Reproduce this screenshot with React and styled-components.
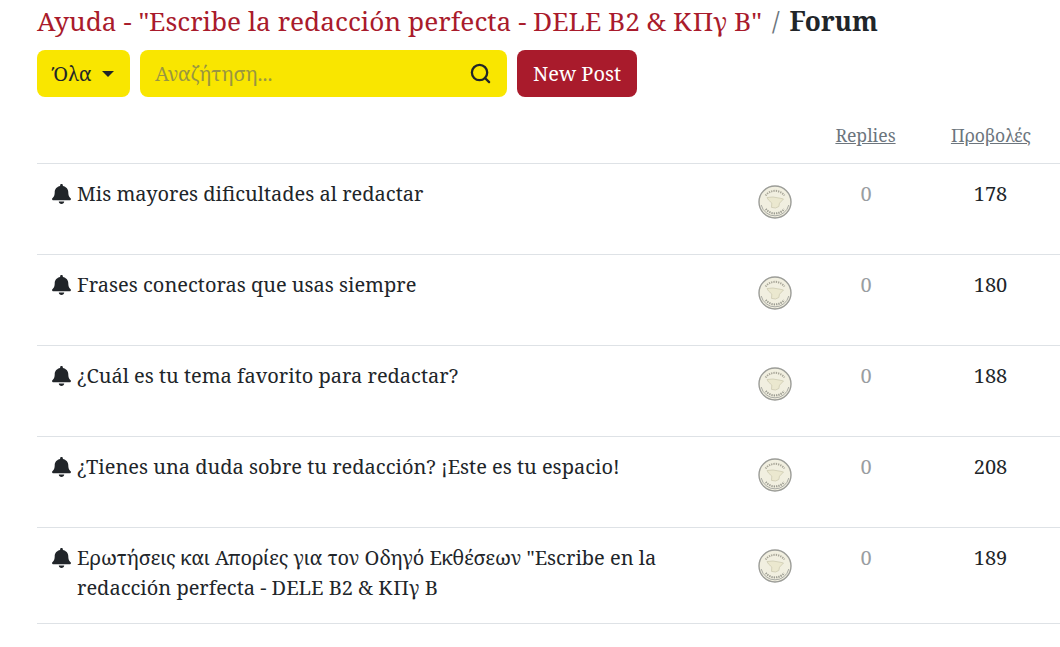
import React from "react";
import styled, { createGlobalStyle } from "styled-components";
import { FaBell } from "react-icons/fa";
import { Search } from "lucide-react";

const Global = createGlobalStyle`
  html, body { margin: 0; padding: 0; background: #fff; overflow: hidden; }
  body { font-family: "Noto Serif", "DejaVu Serif", serif; color: #212529; }
`;

const Page = styled.div`
  width: 1060px;
  height: 647px;
  padding-left: 37px;
  box-sizing: border-box;
  overflow: hidden;
`;
const Breadcrumb = styled.h1`
  display: flex;
  align-items: baseline;
  margin: 0;
  height: 50px;
  padding-top: 5px;
  box-sizing: border-box;
  font-size: 26.25px;
  line-height: 32px;
  font-weight: 400;
  white-space: nowrap;
`;
const Crumb = styled.a`
  color: #a91b2c;
`;
const Sep = styled.span`
  color: #6c757d;
  padding: 0 10px;
`;
const Current = styled.strong`
  font-weight: 700;
  color: #212529;
`;
const Toolbar = styled.div`
  display: flex;
  gap: 10px;
  height: 47px;
`;
const FilterButton = styled.button`
  width: 93px;
  border: 0;
  border-radius: 8px;
  background: #f9e600;
  color: #212529;
  font: inherit;
  font-size: 20px;
  display: flex;
  align-items: center;
  justify-content: center;
  gap: 10px;
  padding: 0;
`;
const Caret = styled.span`
  width: 0;
  height: 0;
  border-left: 6px solid transparent;
  border-right: 6px solid transparent;
  border-top: 6px solid #212529;
`;
const SearchBox = styled.div`
  width: 367px;
  border-radius: 8px;
  background: #f9e600;
  display: flex;
  align-items: center;
  justify-content: space-between;
  padding: 0 15px;
  box-sizing: border-box;
`;
const Placeholder = styled.span`
  color: #999640;
  font-size: 20px;
`;
const PostButton = styled.button`
  width: 120px;
  border: 0;
  border-radius: 8px;
  background: #a91b2c;
  color: #fff;
  font: inherit;
  font-size: 20px;
  padding: 0;
`;
const Head = styled.div`
  display: grid;
  grid-template-columns: 768px 121px 130px;
  height: 67px;
  align-items: end;
  padding-bottom: 16px;
  box-sizing: border-box;
  border-bottom: 1px solid #dee2e6;
`;
const HeadLink = styled.a`
  grid-column: ${p => p.$col};
  justify-self: center;
  color: #6c757d;
  font-size: 17.6px;
  line-height: 24px;
  text-decoration: underline;
`;
const Row = styled.div`
  display: grid;
  grid-template-columns: 705px 65px 118px 131px;
  min-height: 91px;
  box-sizing: border-box;
  border-bottom: 1px solid #dee2e6;
  padding: 15px 0 20px;
`;
const TitleCell = styled.div`
  display: flex;
  padding-left: 15px;
  padding-right: 60px;
  font-size: 20px;
  line-height: 30px;
`;
const Bell = styled.span`
  flex: none;
  width: 25px;
  height: 30px;
  display: flex;
  align-items: center;
  color: #212529;
  svg {
    width: 19px;
    height: 20px;
  }
`;
const Num = styled.div`
  text-align: center;
  font-size: 20px;
  line-height: 30px;
  color: ${p => (p.$muted ? "#999da1" : "#212529")};
`;
const AvatarCell = styled.div`
  display: flex;
  justify-content: center;
  padding-top: 6px;
`;

const Coin = () => (
  <svg width="34" height="34" viewBox="0 0 34 34">
    <circle cx="17" cy="17" r="16" fill="#f1efe0" stroke="#9c9d98" strokeWidth="1.4" />
    <path d="M3.2 20 A14.2 14.2 0 0 0 30.8 20" fill="none" stroke="#a9aaa4" strokeWidth="1" />
    <path d="M7.6 10.5 A11.8 11.8 0 0 1 26.4 10.5" fill="none" stroke="#a8a698" strokeWidth="2" strokeDasharray="1.3 1" />
    <path d="M7.8 24 A11.8 11.8 0 0 0 26.2 24" fill="none" stroke="#9a9a90" strokeWidth="2" strokeDasharray="1.3 1" />
    <path d="M9 12.5 L15 12 L22 13.2 L25.5 14 L21.5 18.2 L20.8 21.5 L17.5 23 L13.5 22.4 L13.8 18 L10.5 15 Z" fill="#ebe8cf" stroke="#c9c6ac" strokeWidth="0.7" />
  </svg>
);

const rows = [
  { t: "Mis mayores dificultades al redactar", v: 178 },
  { t: "Frases conectoras que usas siempre", v: 180 },
  { t: "¿Cuál es tu tema favorito para redactar?", v: 188 },
  { t: "¿Tienes una duda sobre tu redacción? ¡Este es tu espacio!", v: 208 },
  { t: "Ερωτήσεις και Απορίες για τον Οδηγό Εκθέσεων \"Escribe en la redacción perfecta - DELE B2 & ΚΠγ Β", v: 189 },
];

export default function App() {
  return (
    <Page>
      <Global />
      <Breadcrumb>
        <Crumb>Ayuda - "Escribe la redacción perfecta - DELE B2 &amp; ΚΠγ Β"</Crumb>
        <Sep>/</Sep>
        <Current>Forum</Current>
      </Breadcrumb>
      <Toolbar>
        <FilterButton>Όλα <Caret /></FilterButton>
        <SearchBox>
          <Placeholder>Αναζήτηση...</Placeholder>
          <Search size={23} strokeWidth={2.4} color="#212529" />
        </SearchBox>
        <PostButton>New Post</PostButton>
      </Toolbar>
      <Head>
        <HeadLink $col={2}>Replies</HeadLink>
        <HeadLink $col={3}>Προβολές</HeadLink>
      </Head>
      {rows.map(r => (
        <Row key={r.v}>
          <TitleCell>
            <Bell><FaBell preserveAspectRatio="none" /></Bell>
            <span>{r.t}</span>
          </TitleCell>
          <AvatarCell><Coin /></AvatarCell>
          <Num $muted>0</Num>
          <Num>{r.v}</Num>
        </Row>
      ))}
    </Page>
  );
}
